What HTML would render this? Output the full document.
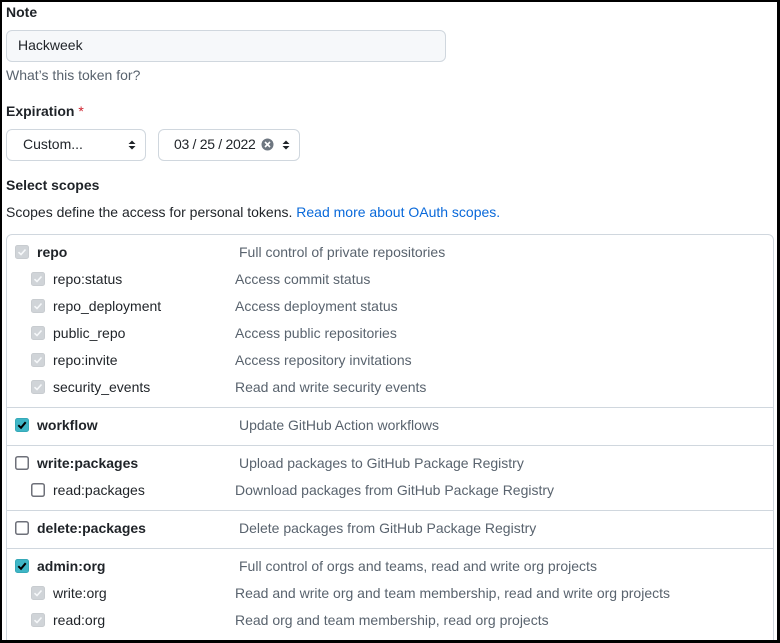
<!DOCTYPE html>
<html><head><meta charset="utf-8"><style>
*{box-sizing:border-box;margin:0;padding:0}
html,body{width:780px;height:643px;overflow:hidden;background:#000}
#f{position:absolute;left:2px;top:2px;width:775px;height:638px;background:#fff;overflow:hidden;font-family:"Liberation Sans",sans-serif;color:#1f2328;font-size:14px}
.a{position:absolute;white-space:nowrap;line-height:20px}
b{font-weight:bold}
.m{color:#59636e}
.inp{position:absolute;border:1px solid #d0d7de;border-radius:6px}
.box{position:absolute;left:4px;top:232px;width:768px;height:420px;border:1px solid #d0d7de;border-radius:6px}
.sep{position:absolute;left:5px;width:767px;height:1px;background:#d0d7de}
.cb{position:absolute;width:14px;height:14px}
</style></head><body><div id="f">
<div class="a" style="left:4px;top:0px"><b>Note</b></div>
<div class="inp" style="left:4px;top:28px;width:440px;height:32px;background:#f6f8fa"></div>
<div class="a" style="left:16px;top:33px">Hackweek</div>
<div class="a m" style="left:4px;top:63px">What’s this token for?</div>
<div class="a" style="left:4px;top:99px"><b>Expiration</b> <span style="color:#cf222e">*</span></div>
<div class="inp" style="left:4px;top:127px;width:140px;height:32px"></div>
<div class="a" style="left:21px;top:132px">Custom...</div>
<svg style="position:absolute;left:126px;top:137px" width="8" height="12"><path d="M0.5 5L4 1.5 7.5 5Z M0.5 7L4 10.5 7.5 7Z" fill="#1f2328"/></svg>
<div class="inp" style="left:156px;top:127px;width:142px;height:32px"></div>
<div class="a" style="left:172px;top:132px;letter-spacing:-0.3px">03 / 25 / 2022</div>
<svg style="position:absolute;left:259px;top:136px" width="13" height="13"><circle cx="6.5" cy="6.5" r="6" fill="#6e7781"/><path d="M4 4L9 9M9 4L4 9" stroke="#fff" stroke-width="1.6"/></svg>
<svg style="position:absolute;left:280px;top:137px" width="8" height="12"><path d="M0.5 5L4 1.5 7.5 5Z M0.5 7L4 10.5 7.5 7Z" fill="#1f2328"/></svg>
<div class="a" style="left:4px;top:173px"><b>Select scopes</b></div>
<div class="a" style="left:4px;top:200px">Scopes define the access for personal tokens. <span style="color:#0969da">Read more about OAuth scopes.</span></div>
<div class="box"></div>
<div class="sep" style="top:405px"></div>
<div class="sep" style="top:443px"></div>
<div class="sep" style="top:508px"></div>
<div class="sep" style="top:546px"></div>
<div id="rows"></div>
<script>
var R=[
[250,0,'repo','Full control of private repositories','d'],
[277,1,'repo:status','Access commit status','d'],
[304,1,'repo_deployment','Access deployment status','d'],
[331,1,'public_repo','Access public repositories','d'],
[358,1,'repo:invite','Access repository invitations','d'],
[385,1,'security_events','Read and write security events','d'],
[423,0,'workflow','Update GitHub Action workflows','c'],
[461,0,'write:packages','Upload packages to GitHub Package Registry','u'],
[488,1,'read:packages','Download packages from GitHub Package Registry','u'],
[526,0,'delete:packages','Delete packages from GitHub Package Registry','u'],
[564,0,'admin:org','Full control of orgs and teams, read and write org projects','c'],
[591,1,'write:org','Read and write org and team membership, read and write org projects','d'],
[618,1,'read:org','Read org and team membership, read org projects','d']];
var h='';
R.forEach(function(r){
var y=r[0],sub=r[1],cx=sub?29:13,tx=sub?51:35,dx=sub?233:237;
var s;
if(r[4]=='d')s='<rect x="0.5" y="0.5" width="13" height="13" rx="2" fill="#d0d4d8" stroke="#c8ccd0"/><path d="M3.5 7.2L6 9.5 10.5 4.5" stroke="#f6f8fa" stroke-width="1.6" fill="none"/>';
else if(r[4]=='c')s='<rect x="0.5" y="0.5" width="13" height="13" rx="2" fill="#3fb6c6" stroke="#36a9b8"/><path d="M3.3 7.2L6 9.8 10.7 4.2" stroke="#000" stroke-width="2" fill="none"/>';
else s='<rect x="0.75" y="0.75" width="12.5" height="12.5" rx="2" fill="#fff" stroke="#6e7079" stroke-width="1.5"/>';
h+='<svg class="cb" style="left:'+cx+'px;top:'+(y-7)+'px" viewBox="0 0 14 14">'+s+'</svg>';
h+='<div class="a" style="left:'+tx+'px;top:'+(y-10)+'px">'+(sub?r[2]:'<b>'+r[2]+'</b>')+'</div>';
h+='<div class="a m" style="left:'+dx+'px;top:'+(y-10)+'px">'+r[3]+'</div>';
});
document.getElementById('rows').innerHTML=h;
</script>
</div></body></html>
